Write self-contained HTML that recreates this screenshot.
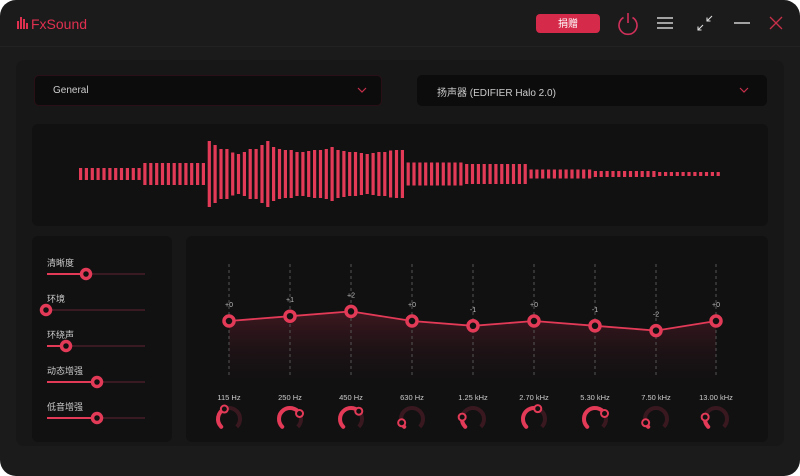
<!DOCTYPE html>
<html><head><meta charset="utf-8"><style>
*{margin:0;padding:0;box-sizing:border-box}
html,body{width:800px;height:476px;background:#fff;overflow:hidden;font-family:"Liberation Sans","Noto Sans CJK SC",sans-serif}
#win{position:absolute;left:0;top:0;width:800px;height:476px;background:#1b1b1c;border-radius:16px;overflow:hidden}
.t{position:absolute;color:#ddd;font-size:10px;white-space:nowrap}
</style></head><body>
<div id="win">
<div style="position:absolute;left:0;top:46px;width:800px;height:1px;background:#222"></div>
<div style="position:absolute;left:16px;top:60px;width:768px;height:386px;background:#171718;border-radius:8px"></div>
<div style="position:absolute;left:34px;top:75px;width:348px;height:31px;background:#0c0c0d;border-radius:5px;border:1px solid #2a1016"></div>
<div class="t" style="left:53px;top:85px;color:#ccc">General</div>
<div style="position:absolute;left:417px;top:75px;width:350px;height:31px;background:#0c0c0d;border-radius:5px"></div>
<div class="t" style="left:437px;top:84px;color:#ccc">扬声器 (EDIFIER Halo 2.0)</div>
<svg style="position:absolute;left:0;top:0" width="800" height="476">
<path d="M358 88 L362 92 L366 88 M740 88 L744 92 L748 88" stroke="#c8304a" stroke-width="1.2" fill="none"/>
<g fill="#e0304f"><rect x="17" y="21" width="2" height="8"/><rect x="20" y="17" width="2" height="12"/><rect x="23" y="19" width="2" height="10"/><rect x="26" y="23" width="2" height="6"/></g>
<text x="31" y="29" fill="#e0304f" font-size="14" font-family="Liberation Sans">FxSound</text>
<rect x="536" y="14" width="64" height="19" rx="4" fill="#d62a4b"/>
<text x="568" y="27" fill="#fff" font-size="10" text-anchor="middle" font-family="Noto Sans CJK SC">捐赠</text>
<path d="M623.5 17.5 A9 9 0 1 0 632.5 17.5" stroke="#d0305a" stroke-width="1.6" fill="none"/><line x1="628" y1="13" x2="628" y2="23" stroke="#d0305a" stroke-width="1.6"/>
<g stroke="#ddd" stroke-width="1.4"><line x1="657" y1="18" x2="673" y2="18"/><line x1="657" y1="23" x2="673" y2="23"/><line x1="657" y1="28" x2="673" y2="28"/>
<line x1="734" y1="23" x2="750" y2="23"/>
<path d="M698 30 L703 25 M698 26.5 L698 30 L701.5 30 M712 16 L707 21 M707 17.5 L707 21 L710.5 21" fill="none" stroke-width="1.1"/></g>
<path d="M770 17 L782 29 M782 17 L770 29" stroke="#c8304a" stroke-width="1.3"/>
<rect x="32" y="124" width="736" height="102" rx="6" fill="#111112"/>
<g id="bars" fill="#e23a57"></g>
<rect x="32" y="236" width="140" height="206" rx="6" fill="#111112"/>
<rect x="186" y="236" width="582" height="206" rx="6" fill="#111112"/>
<defs><linearGradient id="gf" x1="0" y1="0" x2="0" y2="1"><stop offset="0" stop-color="#4a1a24" stop-opacity=".8"/><stop offset="1" stop-color="#1a1012" stop-opacity=".2"/></linearGradient></defs>
<g id="eq"></g>
<g id="sl"></g>
</svg>
<div id="txt"></div>
</div>
<script>
var ns="http://www.w3.org/2000/svg";
function el(p,tag,a){var e=document.createElementNS(ns,tag);for(var k in a)e.setAttribute(k,a[k]);p.appendChild(e);return e;}
var bars=document.getElementById('bars');
var mid=[66,58,50,50,43,40,44,50,50,58,66,54,50,48,48,44,44,46,48,48,50,54,48,46,44,44,42,40,42,44,44,47,48,48];
for(var i=0;i<110;i++){var x=79+i*5.85,h;
 if(x<141)h=12;else if(x<205)h=22;else if(x<402){var j=Math.round((x-208)/5.85);h=mid[Math.min(j,mid.length-1)];}
 else if(x<462)h=23;else if(x<526)h=20;else if(x<589)h=9;else if(x<653)h=6;else h=4;
 el(bars,'rect',{x:x.toFixed(1),y:(174-h/2).toFixed(1),width:3.2,height:h});}
var eq=document.getElementById('eq');
var xs=[229,290,351,412,473,534,595,656,716],vals=[0,1,2,0,-1,0,-1,-2,0];
var fr=['115 Hz','250 Hz','450 Hz','630 Hz','1.25 kHz','2.70 kHz','5.30 kHz','7.50 kHz','13.00 kHz'];
var ka=[-25,60,45,-110,-80,20,60,-110,-80];
var pts=xs.map(function(x,i){return [x,321-vals[i]*4.8];});
var d='M'+pts.map(function(p){return p.join(' ')}).join(' L');
el(eq,'path',{d:d+' L716 378 L229 378 Z',fill:'url(#gf)'});
xs.forEach(function(x){el(eq,'line',{x1:x,y1:264,x2:x,y2:378,stroke:'#555','stroke-dasharray':'3 3','stroke-width':1});});
el(eq,'path',{d:d,stroke:'#e23a57','stroke-width':1.8,fill:'none'});
function pol(cx,cy,r,a){a=a*Math.PI/180;return [cx+r*Math.sin(a),cy-r*Math.cos(a)];}
pts.forEach(function(p,i){
 el(eq,'circle',{cx:p[0],cy:p[1],r:5,fill:'#111',stroke:'#e23a57','stroke-width':3.5});
 var t=el(eq,'text',{x:p[0],y:p[1]-14,fill:'#bbb','font-size':7,'text-anchor':'middle','font-family':'Liberation Sans'});t.textContent=(vals[i]>=0?'+':'')+vals[i];
 var f=el(eq,'text',{x:p[0],y:400,fill:'#ccc','font-size':7.5,'text-anchor':'middle','font-family':'Liberation Sans'});f.textContent=fr[i];
 var cx=p[0],cy=419,r=11,s=pol(cx,cy,r,-135),e=pol(cx,cy,r,135),v=pol(cx,cy,r,ka[i]);
 el(eq,'path',{d:'M'+s+' A11 11 0 1 1 '+e,stroke:'#3a1820','stroke-width':4,fill:'none'});
 el(eq,'path',{d:'M'+s+' A11 11 0 '+((ka[i]+135)>180?1:0)+' 1 '+v,stroke:'#e23a57','stroke-width':4,fill:'none','stroke-linecap':'round'});
 el(eq,'circle',{cx:v[0],cy:v[1],r:3.5,fill:'#111',stroke:'#e23a57','stroke-width':2});
});
var sl=document.getElementById('sl'),lab=['清晰度','环境','环绕声','动态增强','低音增强'],tv=[86,46,66,97,97];
lab.forEach(function(l,i){var y=274+i*36;
 var t=el(sl,'text',{x:47,y:y-8,fill:'#ccc','font-size':9,'font-family':'Noto Sans CJK SC'});t.textContent=l;
 el(sl,'line',{x1:47,y1:y,x2:145,y2:y,stroke:'#3a1a22','stroke-width':2});
 el(sl,'line',{x1:47,y1:y,x2:tv[i],y2:y,stroke:'#e23a57','stroke-width':2});
 el(sl,'circle',{cx:tv[i],cy:y,r:4.5,fill:'#111',stroke:'#e23a57','stroke-width':3.5});
});
</script>
</body></html>
